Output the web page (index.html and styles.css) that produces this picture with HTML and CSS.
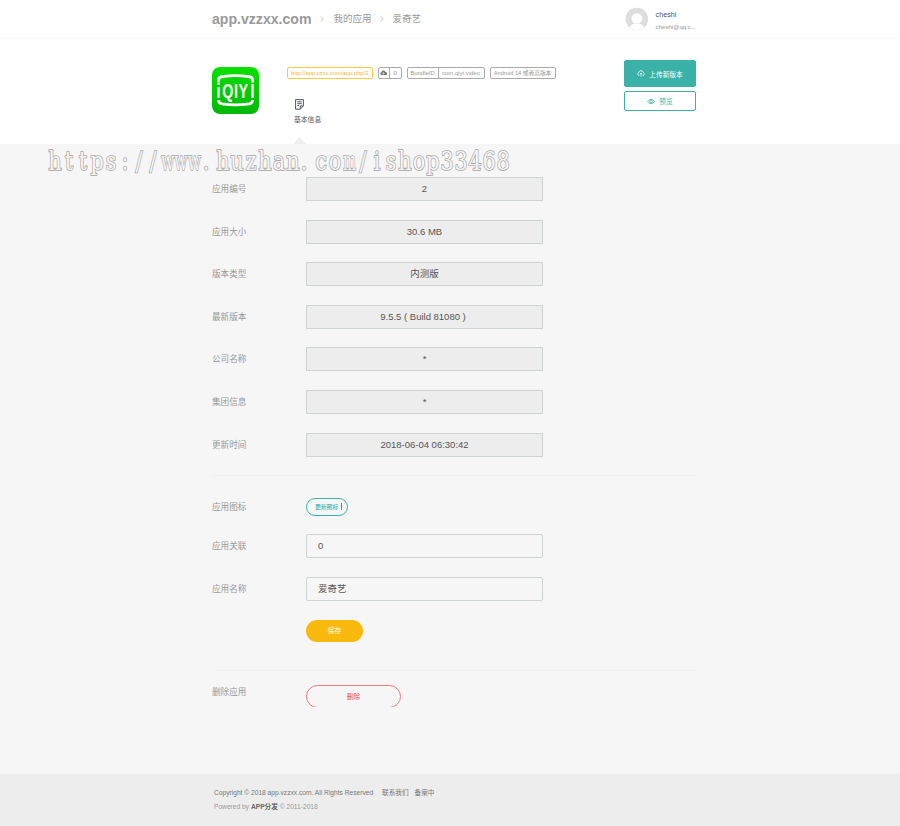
FILE: index.html
```html
<!DOCTYPE html>
<html lang="zh-CN">
<head>
  <meta charset="UTF-8" />
  <meta name="viewport" content="width=device-width, initial-scale=1.0" />
  <title>爱奇艺 - 基本信息</title>
  <link rel="stylesheet" href="styles.css">
</head>
<body>
  <div class="topbar">
    <div class="container topbar-inner">
      <div class="breadcrumb">
        <a class="brand">app.vzzxx.com</a>
        <svg class="chevron" viewBox="0 0 4 6"><path d="M.5.3 3.3 3 .5 5.7" /></svg>
        <a class="crumb">我的应用</a>
        <svg class="chevron" viewBox="0 0 4 6"><path d="M.5.3 3.3 3 .5 5.7" /></svg>
        <span class="crumb">爱奇艺</span>
      </div>
      <div class="user">
        <svg class="avatar" viewBox="0 0 24 24">
          <circle cx="12" cy="12" r="11.5" fill="#dedede" />
          <circle cx="12" cy="11.500" r="5.400" fill="#fff" />
          <path d="M4.800 21c.7-3.400 3.600-4.400 7.200-4.400s6.500 1 7.200 4.400a11.500 11.500 0 0 1-14.400 0z" fill="#fff" />
        </svg>
        <div class="user-info">
          <p class="user-name">cheshi</p>
          <p class="user-mail">cheshi@qq.c...</p>
        </div>
      </div>
    </div>
  </div>

  <div class="app-header">
    <div class="container app-header-inner">
      <svg class="app-icon" viewBox="0 0 47 47">
        <defs>
          <linearGradient id="green" x1="0" y1="0" x2="0" y2="1">
            <stop offset="0" stop-color="#0be000" />
            <stop offset="1" stop-color="#00b80a" />
          </linearGradient>
        </defs>
        <rect width="47" height="47" rx="8" fill="url(#green)" />
        <path d="M6.500 15.500V13Q6.500 10.200 10 9.700 23.500 7.600 37 9.700 40.500 10.200 40.500 13V15.500M6.500 33Q6.500 36.300 10 36.900 23.500 38.800 37 36.900 40.500 36.300 40.500 33" fill="none" stroke="#fff" stroke-width="2.800" />
        <text transform="scale(.68 1)" x="9.600 23.200 35.300 46 59.500" y="31.500">iQIYI</text>
      </svg>

      <div class="app-main">
        <div class="tags">
          <span class="tag tag-link"><span>http://app.vzxx.com/app.php/2</span></span>
          <span class="tag tag-count">
            <span>
              <svg viewBox="0 0 8 6"><path d="M2 5.800A1.800 1.800 0 0 1 1.600 2.300 2.400 2.400 0 0 1 6.200 2 1.900 1.900 0 0 1 6.200 5.800z" fill="#777" /><path d="M4 2.300v2.500M3 3.700l1 1 1-1" stroke="#fff" stroke-width=".7" fill="none" /></svg>
            </span>
            <span>0</span>
          </span>
          <span class="tag tag-bundle"><span>BundleID</span><span>com.qiyi.video</span></span>
          <span class="tag tag-version"><span>Android 14 或者高版本</span></span>
        </div>
        <a class="tab">
          <svg viewBox="0 0 9 11"><path d="M.6.6h7.800v6.200L5.300 10.200H.6zM5.300 10V6.900h3M2.300 2.800h4.400M2.300 4.700h4.400M2.300 6.600h1.700" fill="none" stroke="#4c5560" stroke-width="1" /></svg>
          <span>基本信息</span>
        </a>
      </div>

      <div class="actions">
        <a class="action action-upload">
          <svg viewBox="0 0 9 8"><path d="M2.500 6.500A2 2 0 0 1 2 2.700a2.600 2.600 0 0 1 5 0 2 2 0 0 1-.5 3.800M4.500 7.500V3.700M3.200 4.900l1.300-1.300 1.300 1.300" /></svg>
          上传新版本
        </a>
        <a class="action action-preview">
          <svg viewBox="0 0 9 8"><path d="M.5 4Q4.500-.8 8.500 4 4.500 8.800.5 4z" /><circle cx="4.500" cy="4" r="1.500" /></svg>
          预览
        </a>
      </div>
    </div>
  </div>

  <div class="content">
    <!-- glyphs are squeezed into equal 14px cells -->
    <svg class="watermark" viewBox="0 0 470 36">
      <text transform="scale(.8 1)" x="8.800 26.300 43.800 61.300 78.800 96.300 113.800 131.300" y="26">https://</text>
      <text transform="translate(133 0) scale(.6 1)" y="26">www</text>
      <text transform="scale(.8 1)" x="197.500 218.800 236.300 253.800 271.300 288.800 306.300 320 341.300 358.800" y="26">.huzhan.co</text>
      <text transform="translate(301.500 0) scale(.53 1)" y="26">m</text>
      <text transform="scale(.8 1)" x="393.800 411.300 428.800 446.300 463.800 481.300 498.800 516.300 533.800 551.300 568.800" y="26">/ishop33468</text>
    </svg>

    <div class="container">
      <div class="row"><label>应用编号</label><div class="field readonly">2</div></div>
      <div class="row"><label>应用大小</label><div class="field readonly">30.6 MB</div></div>
      <div class="row"><label>版本类型</label><div class="field readonly">内测版</div></div>
      <div class="row"><label>最新版本</label><div class="field readonly version">9.5.5 ( Build 81080 )</div></div>
      <div class="row"><label>公司名称</label><div class="field readonly">*</div></div>
      <div class="row"><label>集团信息</label><div class="field readonly">*</div></div>
      <div class="row"><label>更新时间</label><div class="field readonly">2018-06-04 06:30:42</div></div>

      <div class="edit-section">
        <div class="row row-icon"><label>应用图标</label><a class="icon-button">更新图标<i></i></a></div>
        <div class="row"><label>应用关联</label><div class="field">0</div></div>
        <div class="row"><label>应用名称</label><div class="field">爱奇艺</div></div>
        <div class="row row-save"><label></label><a class="save-button">保存</a></div>
      </div>

      <div class="delete-section">
        <div class="row row-delete"><label>删除应用</label><a class="delete-button">删除</a></div>
      </div>
    </div>
  </div>

  <div class="footer">
    <div class="container footer-inner">
      <p class="copyright"><span>Copyright © 2018 app.vzzxx.com. All Rights Reserved</span><a>联系我们</a><a>备案中</a></p>
      <p class="powered">Powered by <b>APP分发</b> © 2011-2018</p>
    </div>
  </div>
</body>
</html>
```

FILE: styles.css
```css
body {
  font-family: "Liberation Sans", "Noto Sans CJK SC", sans-serif;
  margin: 0;
  background: #f6f6f6;
  color: #555;
}
* {
  box-sizing: border-box;
}
p {
  margin: 0;
}
.container {
  width: 484px;
  margin-left: 212px;
}

/* top bar */
.topbar {
  height: 39px;
  background: #fff;
  border-bottom: 1px solid #fafafa;
}
.topbar-inner {
  display: flex;
  justify-content: space-between;
}
.breadcrumb {
  display: flex;
  align-items: center;
  height: 37px;
  white-space: nowrap;
}
.brand {
  width: 100px;
  font-size: 14.1px;
  font-weight: bold;
  color: #999;
}
.crumb {
  padding-bottom: 1px;
  font-size: 9.5px;
  color: #999;
}
.chevron {
  width: 4px;
  height: 6px;
  margin: 0 10px 0 7.5px;
  fill: none;
  stroke: #bbb;
  stroke-width: .8;
}
.crumb + .chevron {
  margin: 0 9px 0 8px;
}
.user {
  display: flex;
  width: 71px;
  padding-top: 7px;
}
.avatar {
  width: 24px;
  height: 24px;
  margin-right: 7px;
}
.user-info {
  white-space: nowrap;
}
.user-name {
  font-size: 7.2px;
  line-height: 15px;
  color: #555;
}
.user-mail {
  font-size: 6.1px;
  line-height: 9px;
  color: #999;
}

/* app summary */
.app-header {
  height: 105px;
  background: #fff;
}
.app-header-inner {
  display: flex;
}
.app-icon {
  width: 47px;
  height: 47px;
  margin-top: 28px;
}
.app-icon text {
  font-size: 21px;
  font-weight: bold;
  text-anchor: middle;
  fill: #fff;
}
.app-main {
  width: 337px;
  padding: 28px 0 0 28px;
}
.tags {
  display: flex;
  gap: 5px;
  height: 12px;
  margin-left: 0;
}
.tag {
  display: flex;
  height: 12px;
  border: 1px solid #aaa;
  border-radius: 2px;
  font-size: 6px;
  line-height: 10.5px;
  color: #999;
  white-space: nowrap;
}
.tag > span {
  flex: 1;
  text-align: center;
}
.tag > span + span {
  border-left: 1px solid #aaa;
}
.tag-link {
  width: 85.500px;
  border-color: #f9c841;
  color: #f8b62d;
  font-size: 5.8px;
}
.tag-count {
  width: 24px;
}
.tag-count svg {
  width: 7px;
  height: 5.5px;
}
.tag-bundle {
  width: 78px;
}
.tag-bundle > span:first-child {
  flex: 0 0 30px;
}
.tag-version {
  width: 66px;
  font-size: 5.7px;
}
.tab {
  position: relative;
  display: flex;
  flex-direction: column;
  width: 40px;
  height: 65px;
  margin-left: 7px;
  padding-top: 20px;
  font-size: 6.8px;
  line-height: 10px;
}
.tab svg {
  width: 9px;
  height: 11px;
  margin: 0 0 5px 1px;
}
.tab::after {
  content: "";
  position: absolute;
  left: -1px;
  bottom: 0;
  width: 13px;
  height: 7px;
  background: #efefef;
  clip-path: polygon(50% 0, 100% 100%, 0 100%);
}
.actions {
  width: 72px;
  margin-left: auto;
  padding-top: 21px;
}
.action {
  display: flex;
  align-items: center;
  justify-content: center;
  gap: 4px;
  border: 1px solid #3ab2a7;
  border-radius: 2px;
  font-size: 6.7px;
  color: #3ab2a7;
}
.action svg {
  width: 8px;
  height: 7px;
  fill: none;
  stroke: currentColor;
  stroke-width: .9;
}
.action-upload {
  height: 27px;
  background: #3ab2a7;
  color: #fff;
}
.action-preview {
  height: 20px;
  margin-top: 4px;
}

/* details form */
.content {
  position: relative;
  height: 630px;
  padding-top: 33px;
}
.watermark {
  position: absolute;
  left: 48px;
  top: 0;
  width: 470px;
  height: 36px;
}
.watermark text {
  font-family: "DejaVu Serif", serif;
  font-size: 26px;
  text-anchor: middle;
  fill: #f6f6f6;
  stroke: #a4a4a4;
  stroke-width: 1.6;
  paint-order: stroke;
}
.row {
  display: flex;
  align-items: center;
  height: 24px;
  margin-bottom: 18.6px;
}
.row label {
  width: 94px;
  padding-bottom: 2px;
  font-size: 8.6px;
  color: #999;
}
.field {
  width: 237px;
  height: 24px;
  padding: 0 11px;
  border: 1px solid #ccd3d2;
  border-radius: 2px;
  font-size: 9.5px;
  line-height: 22px;
  color: #555;
}
.readonly {
  background: #ededed;
  border-radius: 0;
  text-align: center;
}
.version {
  padding-right: 14px;
}
.edit-section {
  border-top: 1px solid #efefef;
  padding-top: 22px;
}
.row-icon {
  height: 18px;
  margin-bottom: 18.2px;
}
.icon-button {
  display: flex;
  align-items: center;
  width: 42px;
  height: 18px;
  padding: 0 0 1px 8px;
  border: 1px solid #3ab2a7;
  border-radius: 9px;
  font-size: 5.8px;
  color: #18a696;
}
.icon-button i {
  width: 1px;
  height: 7px;
  margin-left: 3px;
  background: #777;
}
.row-save {
  height: 22px;
  margin-bottom: 0;
}
.save-button {
  width: 57px;
  height: 22px;
  border-radius: 11px;
  background: #f9ba0d;
  color: #fff;
  font-size: 6.8px;
  line-height: 22px;
  text-align: center;
}
.delete-section {
  margin-top: 28px;
  border-top: 1px solid #f2f2f2;
  padding-top: 14.4px;
}
.row-delete {
  height: 22px;
  align-items: flex-start;
}
.delete-button {
  width: 95px;
  height: 23px;
  border: 1px solid #f0787f;
  border-radius: 11.5px;
  clip-path: inset(0 0 1px 0);
  color: #ee4b5b;
  font-size: 6.8px;
  line-height: 21px;
  text-align: center;
}

/* footer */
.footer {
  height: 52px;
  background: #ededed;
}
.footer-inner {
  padding: 12px 2px 0;
  font-size: 6.65px;
  line-height: 14px;
  color: #999;
}
.copyright {
  display: flex;
  color: #777;
}
.copyright span {
  width: 168px;
}
.copyright a {
  margin-right: 6px;
}
.powered b {
  color: #666;
}
```
